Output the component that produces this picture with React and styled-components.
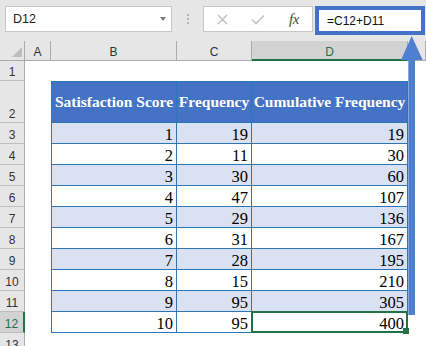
import React from 'react';
import styled, { createGlobalStyle } from 'styled-components';

const green = '#217346';
const tableLine = '#2E75B6';
const headerGray = '#e6e6e6';

const GlobalStyle = createGlobalStyle`
  html, body {
    margin: 0;
    padding: 0;
    background: #fff;
    overflow: hidden;
  }
  * {
    box-sizing: border-box;
  }
`;

const Window = styled.div`
  position: relative;
  width: 426px;
  height: 346px;
  overflow: hidden;
  background: #fff;
  font-family: "Liberation Sans", Arial, sans-serif;
`;

const Toolbar = styled.div`
  display: flex;
  align-items: flex-start;
  height: 41px;
  padding: 6px 0 0 5px;
  background: ${headerGray};
`;

const NameBox = styled.div`
  display: flex;
  align-items: center;
  justify-content: space-between;
  width: 167px;
  height: 26px;
  padding: 0 5px 0 7px;
  background: #fff;
  border: 1px solid #c6c6c6;
  font-size: 12.5px;
  color: #222;
`;

const DropArrow = styled.span`
  width: 0;
  height: 0;
  border-left: 3.5px solid transparent;
  border-right: 3.5px solid transparent;
  border-top: 4px solid #7a7a7a;
`;

const Grip = styled.div`
  display: flex;
  flex-direction: column;
  align-items: center;
  justify-content: center;
  gap: 2px;
  width: 31px;
  height: 26px;

  span {
    width: 2px;
    height: 2px;
    background: #b4b4b4;
  }
`;

const Controls = styled.div`
  display: flex;
  width: 110px;
  height: 26px;
  background: #fff;
  border: 1px solid #c6c6c6;
`;

const IconButton = styled.div`
  display: flex;
  align-items: center;
  justify-content: center;
  width: 36px;
  height: 100%;
`;

const Fx = styled.span`
  font-family: "Liberation Serif", "Times New Roman", serif;
  font-style: italic;
  font-size: 15px;
  color: #4a4a4a;
  letter-spacing: -0.5px;
`;

const FormulaInput = styled.div`
  display: flex;
  align-items: center;
  width: 110px;
  height: 29px;
  margin-left: 2px;
  padding-left: 8px;
  background: #fff;
  border: 4px solid #4472c4;
  font-size: 12px;
  color: #111;
`;

const Sheet = styled.div`
  display: grid;
  grid-template-columns: 25px 26px 126px 75px 156px 18px;
  grid-template-rows: 20px 20px 42px repeat(11, 21px);
`;

const Corner = styled.div`
  display: flex;
  align-items: flex-end;
  justify-content: flex-end;
  padding: 0 2px 3px 0;
  background: ${headerGray};
  border-right: 1px solid #ababab;
  border-bottom: 1px solid #ababab;
`;

const ColHeader = styled.div`
  display: flex;
  align-items: center;
  justify-content: center;
  padding-top: ${p => (p.$active ? 3 : 2)}px;
  background: ${p => (p.$active ? '#d2d2d2' : headerGray)};
  color: ${p => (p.$active ? green : '#333')};
  border-right: 1px solid #ababab;
  border-bottom: ${p => (p.$active ? `2px solid ${green}` : '1px solid #ababab')};
  font-size: 12px;
  line-height: 1;
`;

const RowHeader = styled.div`
  display: flex;
  align-items: flex-end;
  justify-content: center;
  padding-bottom: 2px;
  background: ${p => (p.$active ? '#d2d2d2' : headerGray)};
  color: ${p => (p.$active ? green : '#333')};
  border-right: ${p => (p.$active ? `2px solid ${green}` : '1px solid #ababab')};
  border-bottom: 1px solid #bebebe;
  font-size: 12px;
  line-height: 1;
`;

const Blank = styled.div`
  grid-column: span ${p => p.$span || 1};
  background: #fff;
`;

const HeadCell = styled.div`
  display: flex;
  align-items: center;
  justify-content: center;
  background: #4472c4;
  color: #fff;
  font-family: "Liberation Serif", "Times New Roman", serif;
  font-weight: bold;
  font-size: 15.5px;
  white-space: nowrap;
  border-top: 1px solid ${tableLine};
  border-right: 1px solid ${tableLine};
  border-bottom: 1px solid ${tableLine};
  border-left: ${p => (p.$first ? `1px solid ${tableLine}` : 'none')};
`;

const DataCell = styled.div`
  position: relative;
  display: flex;
  align-items: flex-end;
  justify-content: flex-end;
  padding-right: 3px;
  background: ${p => (p.$striped ? '#d9e1f2' : '#fff')};
  color: #000;
  font-family: "Liberation Serif", "Times New Roman", serif;
  font-size: 16.5px;
  line-height: 1;
  border-right: 1px solid ${tableLine};
  border-bottom: 1px solid ${tableLine};
  border-left: ${p => (p.$first ? `1px solid ${tableLine}` : 'none')};
`;

const Selection = styled.div`
  position: absolute;
  top: -1px;
  left: -1px;
  right: -1px;
  bottom: -1px;
  border: 2px solid ${green};
  pointer-events: none;

  &::after {
    content: '';
    position: absolute;
    right: -3px;
    bottom: -3px;
    width: 6px;
    height: 6px;
    background: ${green};
  }
`;

const Arrow = styled.svg`
  position: absolute;
  left: 400px;
  top: 35px;
  z-index: 2;
`;

const rows = [
  [1, 19, 19],
  [2, 11, 30],
  [3, 30, 60],
  [4, 47, 107],
  [5, 29, 136],
  [6, 31, 167],
  [7, 28, 195],
  [8, 15, 210],
  [9, 95, 305],
  [10, 95, 400],
];

const headers = ['Satisfaction Score', 'Frequency', 'Cumulative Frequency'];

export default function App() {
  return (
    <Window>
      <GlobalStyle />
      <Toolbar>
        <NameBox>
          <span>D12</span>
          <DropArrow />
        </NameBox>
        <Grip>
          <span />
          <span />
          <span />
        </Grip>
        <Controls>
          <IconButton>
            <svg width="11" height="11" viewBox="0 0 11 11">
              <path d="M1 1 L10 10 M10 1 L1 10" stroke="#bdbdbd" strokeWidth="1.3" fill="none" />
            </svg>
          </IconButton>
          <IconButton>
            <svg width="14" height="11" viewBox="0 0 14 11">
              <path d="M1 5.5 L5 9.5 L13 1.5" stroke="#c4c4c4" strokeWidth="1.6" fill="none" />
            </svg>
          </IconButton>
          <IconButton>
            <Fx>fx</Fx>
          </IconButton>
        </Controls>
        <FormulaInput>=C12+D11</FormulaInput>
      </Toolbar>

      <Sheet>
        <Corner>
          <svg width="10" height="10" viewBox="0 0 10 10">
            <polygon points="10,0 10,10 0,10" fill="#bdbdbd" />
          </svg>
        </Corner>
        <ColHeader>A</ColHeader>
        <ColHeader>B</ColHeader>
        <ColHeader>C</ColHeader>
        <ColHeader $active>D</ColHeader>
        <ColHeader />

        <RowHeader>1</RowHeader>
        <Blank $span={5} />

        <RowHeader>2</RowHeader>
        <Blank />
        {headers.map((h, i) => (
          <HeadCell key={h} $first={i === 0}>
            {h}
          </HeadCell>
        ))}
        <Blank />

        {rows.map((r, i) => {
          const rowNum = i + 3;
          const isLast = rowNum === 12;
          return (
            <React.Fragment key={rowNum}>
              <RowHeader $active={isLast}>{rowNum}</RowHeader>
              <Blank />
              {r.map((v, j) => (
                <DataCell key={j} $first={j === 0} $striped={i % 2 === 0}>
                  {v}
                  {isLast && j === 2 && <Selection />}
                </DataCell>
              ))}
              <Blank />
            </React.Fragment>
          );
        })}

        <RowHeader>13</RowHeader>
        <Blank $span={5} />
      </Sheet>

      <Arrow width="24" height="281" viewBox="0 0 24 281">
        <polygon
          points="11.7,1 22.7,25 15,25 15,280 8.3,280 8.3,25 1,25"
          fill="#4f80d0"
        />
      </Arrow>
    </Window>
  );
}
